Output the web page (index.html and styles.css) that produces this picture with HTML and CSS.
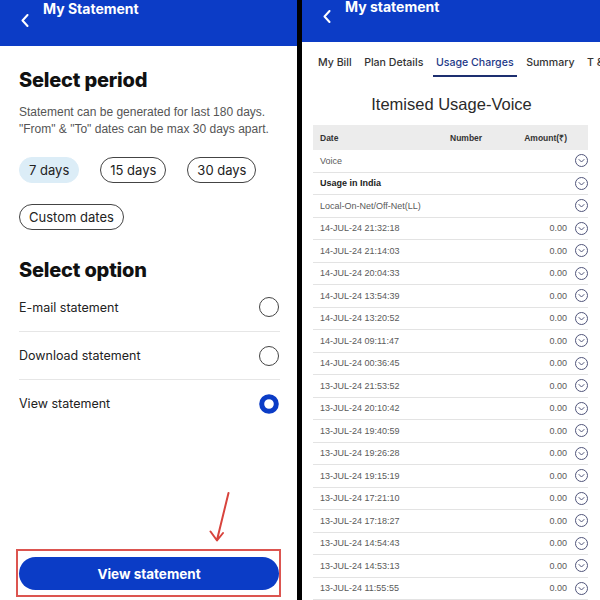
FILE: index.html
```html
<!DOCTYPE html>
<html>
<head>
<meta charset="utf-8">
<link rel="stylesheet" href="styles.css">
</head>
<body>
<div class="screen">
  <section class="left">
    <header class="bar bar-left">
      <svg class="back" width="8" height="13" viewBox="0 0 8 13"><path d="M6.5 1 L1.5 6.5 L6.5 12" fill="none" stroke="#fff" stroke-width="2" stroke-linecap="round" stroke-linejoin="round"/></svg>
      <span class="bar-title">My Statement</span>
    </header>
    <div class="content">
      <h2 class="heading">Select period</h2>
      <p class="desc">Statement can be generated for last 180 days.<br>"From" &amp; "To" dates can be max 30 days apart.</p>
      <div class="chips">
        <span class="chip chip-active">7 days</span>
        <span class="chip">15 days</span>
        <span class="chip">30 days</span>
        <span class="chip">Custom dates</span>
      </div>
      <h2 class="heading heading-option">Select option</h2>
      <ul class="options">
        <li class="option"><span>E-mail statement</span><svg width="20" height="20" viewBox="0 0 20 20"><circle cx="10" cy="10" r="9.5" fill="none" stroke="#444" stroke-width="1"/></svg></li>
        <li class="option"><span>Download statement</span><svg width="20" height="20" viewBox="0 0 20 20"><circle cx="10" cy="10" r="9.5" fill="none" stroke="#444" stroke-width="1"/></svg></li>
        <li class="option"><span>View statement</span><svg width="20" height="20" viewBox="0 0 20 20"><circle cx="10" cy="10" r="7.3" fill="#fff" stroke="#0b3cc6" stroke-width="5"/></svg></li>
      </ul>
    </div>
    <div class="cta-box"><button class="cta">View statement</button></div>
    <svg class="arrow" width="30" height="60" viewBox="205 488 30 60"><path d="M228.5 493 L217 540 M210.5 531.5 L217 540.5 L223 533" fill="none" stroke="#d8443d" stroke-width="2" stroke-linecap="round" stroke-linejoin="round"/></svg>
  </section>
  <div class="divider"></div>
  <section class="right">
    <header class="bar bar-right">
      <svg class="back back-right" width="8" height="13" viewBox="0 0 8 13"><path d="M6.5 1 L1.5 6.5 L6.5 12" fill="none" stroke="#fff" stroke-width="2" stroke-linecap="round" stroke-linejoin="round"/></svg>
      <span class="bar-title bar-title-right">My statement</span>
    </header>
    <nav class="tabs">
      <span class="tab">My Bill</span>
      <span class="tab">Plan Details</span>
      <span class="tab tab-active">Usage Charges</span>
      <span class="tab">Summary</span>
      <span class="tab">T &amp; C</span>
    </nav>
    <h3 class="usage-title">Itemised Usage-Voice</h3>
    <div class="table">
      <div class="thead"><span>Date</span><span>Number</span><span>Amount(₹)</span></div>
      <div class="row"><span>Voice</span><span></span><svg width="13" height="13" viewBox="0 0 13 13"><circle cx="6.5" cy="6.5" r="6" fill="none" stroke="#50557a"/><path d="M4 5.5 L6.5 8 L9 5.5" fill="none" stroke="#50557a" stroke-linecap="round" stroke-linejoin="round"/></svg></div>
      <div class="row row-bold"><span>Usage in India</span><span></span><svg width="13" height="13" viewBox="0 0 13 13"><circle cx="6.5" cy="6.5" r="6" fill="none" stroke="#50557a"/><path d="M4 5.5 L6.5 8 L9 5.5" fill="none" stroke="#50557a" stroke-linecap="round" stroke-linejoin="round"/></svg></div>
      <div class="row"><span>Local-On-Net/Off-Net(LL)</span><span></span><svg width="13" height="13" viewBox="0 0 13 13"><circle cx="6.5" cy="6.5" r="6" fill="none" stroke="#50557a"/><path d="M4 5.5 L6.5 8 L9 5.5" fill="none" stroke="#50557a" stroke-linecap="round" stroke-linejoin="round"/></svg></div>
      <div class="row"><span>14-JUL-24 21:32:18</span><span>0.00</span><svg width="13" height="13" viewBox="0 0 13 13"><circle cx="6.5" cy="6.5" r="6" fill="none" stroke="#50557a"/><path d="M4 5.5 L6.5 8 L9 5.5" fill="none" stroke="#50557a" stroke-linecap="round" stroke-linejoin="round"/></svg></div>
      <div class="row"><span>14-JUL-24 21:14:03</span><span>0.00</span><svg width="13" height="13" viewBox="0 0 13 13"><circle cx="6.5" cy="6.5" r="6" fill="none" stroke="#50557a"/><path d="M4 5.5 L6.5 8 L9 5.5" fill="none" stroke="#50557a" stroke-linecap="round" stroke-linejoin="round"/></svg></div>
      <div class="row"><span>14-JUL-24 20:04:33</span><span>0.00</span><svg width="13" height="13" viewBox="0 0 13 13"><circle cx="6.5" cy="6.5" r="6" fill="none" stroke="#50557a"/><path d="M4 5.5 L6.5 8 L9 5.5" fill="none" stroke="#50557a" stroke-linecap="round" stroke-linejoin="round"/></svg></div>
      <div class="row"><span>14-JUL-24 13:54:39</span><span>0.00</span><svg width="13" height="13" viewBox="0 0 13 13"><circle cx="6.5" cy="6.5" r="6" fill="none" stroke="#50557a"/><path d="M4 5.5 L6.5 8 L9 5.5" fill="none" stroke="#50557a" stroke-linecap="round" stroke-linejoin="round"/></svg></div>
      <div class="row"><span>14-JUL-24 13:20:52</span><span>0.00</span><svg width="13" height="13" viewBox="0 0 13 13"><circle cx="6.5" cy="6.5" r="6" fill="none" stroke="#50557a"/><path d="M4 5.5 L6.5 8 L9 5.5" fill="none" stroke="#50557a" stroke-linecap="round" stroke-linejoin="round"/></svg></div>
      <div class="row"><span>14-JUL-24 09:11:47</span><span>0.00</span><svg width="13" height="13" viewBox="0 0 13 13"><circle cx="6.5" cy="6.5" r="6" fill="none" stroke="#50557a"/><path d="M4 5.5 L6.5 8 L9 5.5" fill="none" stroke="#50557a" stroke-linecap="round" stroke-linejoin="round"/></svg></div>
      <div class="row"><span>14-JUL-24 00:36:45</span><span>0.00</span><svg width="13" height="13" viewBox="0 0 13 13"><circle cx="6.5" cy="6.5" r="6" fill="none" stroke="#50557a"/><path d="M4 5.5 L6.5 8 L9 5.5" fill="none" stroke="#50557a" stroke-linecap="round" stroke-linejoin="round"/></svg></div>
      <div class="row"><span>13-JUL-24 21:53:52</span><span>0.00</span><svg width="13" height="13" viewBox="0 0 13 13"><circle cx="6.5" cy="6.5" r="6" fill="none" stroke="#50557a"/><path d="M4 5.5 L6.5 8 L9 5.5" fill="none" stroke="#50557a" stroke-linecap="round" stroke-linejoin="round"/></svg></div>
      <div class="row"><span>13-JUL-24 20:10:42</span><span>0.00</span><svg width="13" height="13" viewBox="0 0 13 13"><circle cx="6.5" cy="6.5" r="6" fill="none" stroke="#50557a"/><path d="M4 5.5 L6.5 8 L9 5.5" fill="none" stroke="#50557a" stroke-linecap="round" stroke-linejoin="round"/></svg></div>
      <div class="row"><span>13-JUL-24 19:40:59</span><span>0.00</span><svg width="13" height="13" viewBox="0 0 13 13"><circle cx="6.5" cy="6.5" r="6" fill="none" stroke="#50557a"/><path d="M4 5.5 L6.5 8 L9 5.5" fill="none" stroke="#50557a" stroke-linecap="round" stroke-linejoin="round"/></svg></div>
      <div class="row"><span>13-JUL-24 19:26:28</span><span>0.00</span><svg width="13" height="13" viewBox="0 0 13 13"><circle cx="6.5" cy="6.5" r="6" fill="none" stroke="#50557a"/><path d="M4 5.5 L6.5 8 L9 5.5" fill="none" stroke="#50557a" stroke-linecap="round" stroke-linejoin="round"/></svg></div>
      <div class="row"><span>13-JUL-24 19:15:19</span><span>0.00</span><svg width="13" height="13" viewBox="0 0 13 13"><circle cx="6.5" cy="6.5" r="6" fill="none" stroke="#50557a"/><path d="M4 5.5 L6.5 8 L9 5.5" fill="none" stroke="#50557a" stroke-linecap="round" stroke-linejoin="round"/></svg></div>
      <div class="row"><span>13-JUL-24 17:21:10</span><span>0.00</span><svg width="13" height="13" viewBox="0 0 13 13"><circle cx="6.5" cy="6.5" r="6" fill="none" stroke="#50557a"/><path d="M4 5.5 L6.5 8 L9 5.5" fill="none" stroke="#50557a" stroke-linecap="round" stroke-linejoin="round"/></svg></div>
      <div class="row"><span>13-JUL-24 17:18:27</span><span>0.00</span><svg width="13" height="13" viewBox="0 0 13 13"><circle cx="6.5" cy="6.5" r="6" fill="none" stroke="#50557a"/><path d="M4 5.5 L6.5 8 L9 5.5" fill="none" stroke="#50557a" stroke-linecap="round" stroke-linejoin="round"/></svg></div>
      <div class="row"><span>13-JUL-24 14:54:43</span><span>0.00</span><svg width="13" height="13" viewBox="0 0 13 13"><circle cx="6.5" cy="6.5" r="6" fill="none" stroke="#50557a"/><path d="M4 5.5 L6.5 8 L9 5.5" fill="none" stroke="#50557a" stroke-linecap="round" stroke-linejoin="round"/></svg></div>
      <div class="row"><span>13-JUL-24 14:53:13</span><span>0.00</span><svg width="13" height="13" viewBox="0 0 13 13"><circle cx="6.5" cy="6.5" r="6" fill="none" stroke="#50557a"/><path d="M4 5.5 L6.5 8 L9 5.5" fill="none" stroke="#50557a" stroke-linecap="round" stroke-linejoin="round"/></svg></div>
      <div class="row"><span>13-JUL-24 11:55:55</span><span>0.00</span><svg width="13" height="13" viewBox="0 0 13 13"><circle cx="6.5" cy="6.5" r="6" fill="none" stroke="#50557a"/><path d="M4 5.5 L6.5 8 L9 5.5" fill="none" stroke="#50557a" stroke-linecap="round" stroke-linejoin="round"/></svg></div>
    </div>
  </section>
</div>
</body>
</html>
```

FILE: styles.css
```css
* { box-sizing: border-box; }
html, body { margin: 0; padding: 0; background: #fff; }
body { width: 600px; height: 600px; overflow: hidden; font-family: Inter, "Liberation Sans", sans-serif; }

.screen { display: flex; width: 600px; height: 600px; }

.left { position: relative; width: 297px; height: 600px; display: flex; flex-direction: column; background: #fff; }
.divider { width: 5px; height: 600px; background: #000; flex: none; }
.right { width: 298px; height: 600px; overflow: hidden; background: #fff; display: flex; flex-direction: column; }

.bar { background: #0c3cc6; display: flex; align-items: flex-start; flex: none; }
.bar-left { height: 46px; padding-left: 21px; }
.bar-right { height: 42px; padding-left: 21px; }
.back { flex: none; margin-top: 14px; }
.back-right { margin-top: 10px; }
.bar-title { color: #fff; font-weight: 700; font-size: 14px; line-height: 17px; margin-left: 14px; }
.bar-title-right { margin-left: 14px; margin-top: -2px; }

.content { padding: 0 17px 0 19px; }
.heading { margin: 22px 0 0; font-size: 20px; line-height: 24px; font-weight: 800; color: #111; letter-spacing: -0.2px; }
.heading-option { margin-top: 28px; }
.desc { margin: 12px 0 0; font-family: "Liberation Sans", Arial, sans-serif; font-size: 12px; line-height: 17px; color: #555; white-space: nowrap; }

.chips { display: flex; flex-wrap: wrap; gap: 21px 21px; margin-top: 19px; width: 250px; }
.chip { height: 26px; padding: 0 9px; border: 1px solid #444; border-radius: 13px; font-size: 13px; line-height: 24px; color: #222; }
.chip-active { background: #dcedf7; border-color: #dcedf7; }

.options { list-style: none; margin: 1px 0 0; padding: 0; }
.option { height: 48px; display: flex; align-items: center; justify-content: space-between; padding-right: 1px; font-size: 12.5px; color: #222; }
.option + .option { border-top: 1px solid #e6e6e6; }

.cta-box { margin: auto 0 3px 16px; width: 265px; border: 2px solid #dc5550; padding: 6px 0 5px 1px; }
.cta { display: block; width: 260px; height: 33px; border: none; border-radius: 17px; background: #0b3cc6; color: #fff; font-family: Inter, "Liberation Sans", sans-serif; font-weight: 700; font-size: 13.5px; }

.arrow { position: absolute; left: 205px; top: 488px; }

.tabs { display: flex; gap: 6.5px; padding-left: 13px; white-space: nowrap; flex: none; }
.tab { padding: 14px 3px 5px; font-size: 10.6px; line-height: 14px; font-weight: 500; color: #333; border-bottom: 2px solid transparent; }
.tab-active { color: #1d3887; border-bottom-color: #1d2f70; }

.usage-title { margin: 17px 0 0; text-align: center; padding-left: 1px; font-family: "Liberation Sans", Arial, sans-serif; font-weight: 400; font-size: 16.5px; line-height: 20px; color: #2a2a2a; }

.table { margin: 11px 12px 0 11px; font-family: "Liberation Sans", Arial, sans-serif; }
.thead { height: 25px; background: #ececec; display: grid; grid-template-columns: 130px 1fr auto; align-items: center; padding: 0 21px 0 7px; font-size: 8.5px; font-weight: 700; color: #333; }
.row { height: 22.5px; display: grid; grid-template-columns: 1fr auto 13px; column-gap: 8px; align-items: center; padding: 0 0 0 7px; border-bottom: 1px solid #e3e3e3; font-size: 9px; color: #5a5a5a; }
.row-bold { font-weight: 700; color: #222; }
```
